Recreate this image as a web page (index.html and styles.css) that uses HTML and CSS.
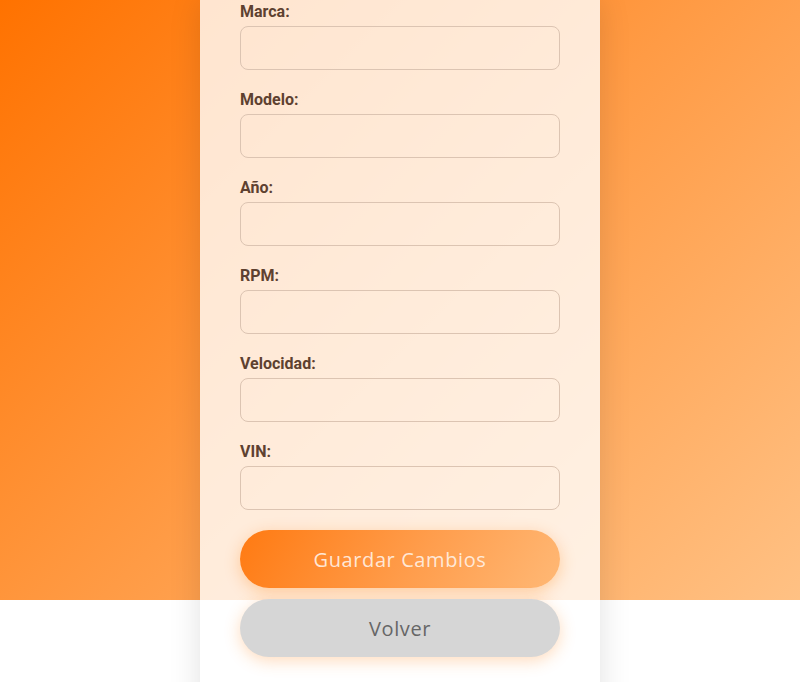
FILE: index.html
```html
<!DOCTYPE html>
<html lang="es">
<head>
<meta charset="utf-8">
<title>Editar vehículo</title>
<link rel="stylesheet" href="styles.css">
</head>
<body>
<main class="card">
  <form class="form">
    <div class="field">
      <label class="label" for="marca">Marca:</label>
      <input class="input" id="marca" type="text">
    </div>
    <div class="field">
      <label class="label" for="modelo">Modelo:</label>
      <input class="input" id="modelo" type="text">
    </div>
    <div class="field">
      <label class="label" for="anio">Año:</label>
      <input class="input" id="anio" type="text">
    </div>
    <div class="field">
      <label class="label" for="rpm">RPM:</label>
      <input class="input" id="rpm" type="text">
    </div>
    <div class="field">
      <label class="label" for="velocidad">Velocidad:</label>
      <input class="input" id="velocidad" type="text">
    </div>
    <div class="field">
      <label class="label" for="vin">VIN:</label>
      <input class="input" id="vin" type="text">
    </div>
    <div class="actions">
      <button class="btn btn-primary" type="button">Guardar Cambios</button>
      <button class="btn btn-secondary" type="button">Volver</button>
    </div>
  </form>
</main>
</body>
</html>
```

FILE: styles.css
```css
html {
  background: #ffffff;
}

body {
  margin: 0;
  font-family: Roboto, "Liberation Sans", sans-serif;
  background: linear-gradient(135deg, #ff7200 0%, #ff9b45 50%, #ffc184 100%) no-repeat;
  background-size: 100% 600px;
}

.card {
  width: 320px;
  margin: 0 auto;
  padding: 0 40px 60px;
  background: rgba(255, 255, 255, 0.8);
  box-shadow: 0 0 30px rgba(0, 0, 0, 0.12);
}

.form {
  display: flex;
  flex-direction: column;
}

.field {
  display: flex;
  flex-direction: column;
  margin-bottom: 18px;
}

.label {
  font-size: 16px;
  line-height: 19px;
  font-weight: 700;
  color: #5e4130;
  margin: 2px 0 5px;
}

.input {
  box-sizing: border-box;
  height: 44px;
  width: 100%;
  border: 1px solid #dcc4b2;
  border-radius: 8px;
  background: transparent;
  font: inherit;
  padding: 0 12px;
}

.actions {
  display: flex;
  flex-direction: column;
  gap: 11px;
  margin-top: 2px;
}

.btn {
  height: 58px;
  width: 100%;
  border: none;
  border-radius: 29px;
  font-family: "Open Sans", "DejaVu Sans", sans-serif;
  font-size: 20px;
  letter-spacing: 0.6px;
  cursor: pointer;
}

.btn-primary {
  background: linear-gradient(120deg, #ff7a12 0%, #ff9d4c 55%, #ffb875 100%);
  color: rgba(255, 240, 228, 0.92);
  box-shadow: 0 4px 16px rgba(255, 122, 0, 0.3);
}

.btn-secondary {
  background: #d6d6d6;
  color: #666666;
  box-shadow: 0 4px 16px rgba(255, 140, 40, 0.3);
}
```
